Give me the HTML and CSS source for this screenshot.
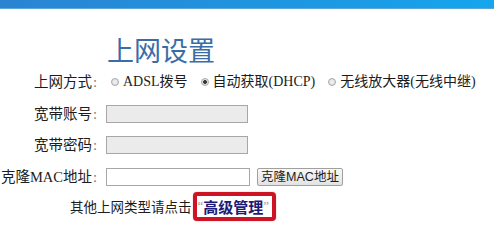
FILE: index.html
```html
<!DOCTYPE html>
<html lang="zh-CN">
<head>
<meta charset="utf-8">
<title>上网设置</title>
<link rel="stylesheet" href="styles.css">
</head>
<body>
<div class="topbar"></div>
<main class="page">
  <h1 class="title">上网设置</h1>
  <div class="form">
    <div class="label">上网方式<span class="colon">:</span></div>
    <div class="field radios">
      <span class="radio"></span><span class="opt">ADSL拨号</span>
      <span class="radio checked"></span><span class="opt">自动获取(DHCP)</span>
      <span class="radio"></span><span class="opt">无线放大器(无线中继)</span>
    </div>
    <div class="label">宽带账号<span class="colon">:</span></div>
    <div class="field"><span class="input disabled"></span></div>
    <div class="label">宽带密码<span class="colon">:</span></div>
    <div class="field"><span class="input disabled"></span></div>
    <div class="label">克隆MAC地址<span class="colon">:</span></div>
    <div class="field"><span class="input wide"></span><span class="button">克隆MAC地址</span></div>
  </div>
  <p class="hint">其他上网类型请点击<span class="mark"><span class="q">“</span><span class="link">高级管理</span><span class="q">”</span></span></p>
</main>
</body>
</html>
```
FILE: styles.css
```css
* { box-sizing: border-box; }
html, body { margin: 0; padding: 0; background: #fff; }
body {
  width: 494px;
  height: 234px;
  overflow: hidden;
  font-family: "Liberation Serif", "Noto Sans CJK SC", serif;
  font-size: 14.5px;
  color: #1c1c1c;
}
.topbar {
  height: 9px;
  background: linear-gradient(to right, #2a84d2, #1c9ae4 70%, #14a6ee);
  border-bottom: 1px solid #5fa6d8;
}
.page { padding-top: 23px; }
.title {
  margin: 0 0 0 107px;
  font-family: "Noto Sans CJK SC", sans-serif;
  font-weight: 400;
  font-size: 27px;
  line-height: 36px;
  color: #3a6da6;
}
.form {
  margin-top: 5px;
  display: grid;
  grid-template-columns: 97px 1fr;
  grid-auto-rows: 18px;
  column-gap: 9px;
  row-gap: 13.5px;
}
.label {
  text-align: right;
  line-height: 18px;
  white-space: nowrap;
}
.colon { color: #777; margin-left: 1px; }
.field {
  display: flex;
  align-items: center;
  height: 18px;
}
.radios { white-space: nowrap; font-size: 14px; }
.radio {
  width: 8px;
  height: 8px;
  margin: 0 4px 0 5px;
  border-radius: 50%;
  border: 1px solid #a8a8a8;
  background: radial-gradient(circle, #f4f4f4, #d8d8d8);
  flex: none;
}
.radio.checked {
  background: radial-gradient(circle, #3a3a3a 0 1.6px, #e8e8e8 2.2px, #d4d4d4);
}
.opt { margin-right: 8px; line-height: 18px; }
.input {
  display: block;
  width: 142px;
  height: 18px;
  border: 1px solid #a7a7a7;
  background: #fff;
}
.input.disabled { background: #ebebeb; }
.input.wide { width: 144px; }
.button {
  display: block;
  margin-left: 7px;
  height: 18px;
  width: 86px;
  border: 1px solid #a0a0a0;
  border-radius: 2px;
  background: linear-gradient(#f8f8f8, #e2e2e2);
  font-family: "Liberation Sans", "Noto Sans CJK SC", sans-serif;
  font-size: 12.5px;
  line-height: 16px;
  text-align: center;
  white-space: nowrap;
  color: #1c1c1c;
}
.hint {
  margin: 6px 0 0 70px;
  height: 29px;
  display: flex;
  align-items: center;
  white-space: nowrap;
  font-family: "Noto Sans CJK SC", sans-serif;
  font-size: 13.5px;
}
.mark {
  display: inline-flex;
  align-items: center;
  height: 29px;
  margin-left: 1px;
  padding: 0 3px 0 1px;
  border: 4px solid #cc1424;
  border-radius: 4px;
  box-shadow: 0 0 1px #e05060;
}
.q {
  font-family: "Liberation Serif", serif;
  color: #9a9a9a;
  font-size: 13px;
}
.link {
  font-weight: 700;
  color: #1e1a78;
  font-size: 15px;
}
```
